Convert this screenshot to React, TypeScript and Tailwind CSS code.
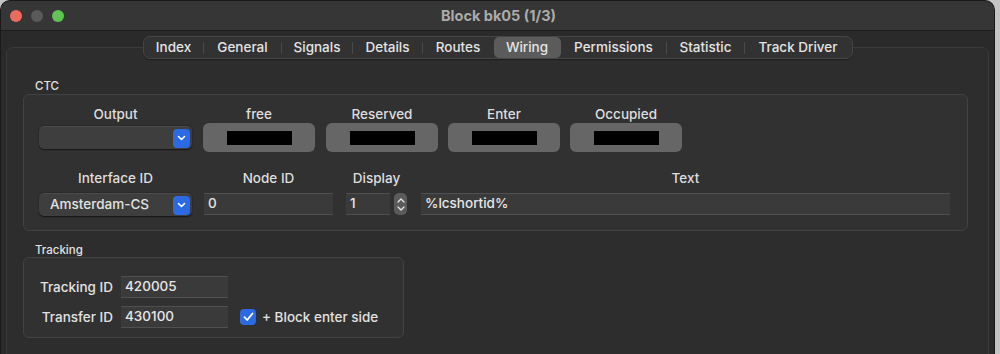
import React from "react";

const font = { fontFamily: "Inter, 'Noto Sans', 'Liberation Sans', sans-serif" };

const tabs: [string, number][] = [
  ["Index", 61],
  ["General", 78],
  ["Signals", 71],
  ["Details", 70],
  ["Routes", 71],
  ["Wiring", 67],
  ["Permissions", 106],
  ["Statistic", 78],
  ["Track Driver", 107],
];

function Chevron() {
  return (
    <svg width="9" height="6" viewBox="0 0 9 6" fill="none">
      <path d="M1.5 1.5 L4.5 4.5 L7.5 1.5" stroke="white" strokeWidth="1.6" strokeLinecap="round" strokeLinejoin="round" />
    </svg>
  );
}

function Popup({ value, width }: { value: string; width: string }) {
  return (
    <div className={`${width} h-[23px] flex items-center justify-between rounded-[5px] bg-[#3e3e3e] shadow-[0_0.5px_1.5px_rgba(0,0,0,0.6)] border-t border-[#4a4a4a] pl-[11px] pr-[2px]`}>
      <span className="text-[13.5px] font-medium text-[#e2e2e2] leading-none">{value}</span>
      <div className="w-[17px] h-[19px] rounded-[4px] bg-[#2c6ae3] flex items-center justify-center">
        <Chevron />
      </div>
    </div>
  );
}

function Field({ value, width }: { value: string; width: string }) {
  return (
    <div className={`${width} h-[22px] flex items-center bg-[#3a3a3a] border-t border-[#323232] border-b border-[#505050] pl-[4px]`}>
      <span className="text-[13.5px] font-medium text-[#e6e6e6] leading-none">{value}</span>
    </div>
  );
}

function Well() {
  return (
    <div className="w-[112px] h-[29px] rounded-[6px] bg-[#666666] flex items-center justify-center">
      <div className="w-[65px] h-[14px] bg-black" />
    </div>
  );
}

function Labeled({ label, children, width }: { label: string; children: React.ReactNode; width: string }) {
  return (
    <div className={`${width} flex flex-col items-center`}>
      <div className="h-[16px] leading-[16px] text-[13.5px] font-medium text-[#dedede] whitespace-nowrap">{label}</div>
      {children}
    </div>
  );
}

export default function App() {
  return (
    <div className="w-[1000px] h-[354px] bg-[#c4c4c4] overflow-hidden flex" style={font}>
      <div className="w-[995px] h-[354px] flex flex-col rounded-t-[10px] bg-[#2a2a2a] border-l border-r border-t border-[#1a1a1a] overflow-hidden">
        {/* title bar */}
        <div className="h-[30px] shrink-0 bg-[#363636] border-b border-[#1c1c1c] flex items-center relative">
          <div className="flex items-center gap-[9px] pl-[9px]">
            <div className="w-[12px] h-[12px] rounded-full bg-[#ee6a5f]" />
            <div className="w-[12px] h-[12px] rounded-full bg-[#5a5a5a]" />
            <div className="w-[12px] h-[12px] rounded-full bg-[#5fc454]" />
          </div>
          <div className="absolute left-0 right-0 top-0 h-[29px] flex items-center justify-center pointer-events-none">
            <span className="text-[14.5px] font-bold text-[#ababab] pl-[2px]">Block bk05 (1/3)</span>
          </div>
        </div>

        {/* tab view */}
        <div className="flex-1 pl-[5px] pr-[5px] pt-[16px]">
          <div className="h-[400px] rounded-[7px] border border-[#3b3b3b] bg-[#2d2d2d]">
            <div className="flex justify-center -mt-[12px] h-[23px]">
              <div className="flex items-center h-[23px] rounded-[7px] bg-[#323232] border border-[#464646] shadow-[0_1px_1px_rgba(0,0,0,0.3)]">
                {tabs.map(([t, w], i) => {
                  const sel = t === "Wiring";
                  const nextSel = i + 1 < tabs.length && tabs[i + 1][0] === "Wiring";
                  const showSep = i < tabs.length - 1 && !sel && !nextSel;
                  return (
                    <div key={t} className="relative h-[21px] flex items-center justify-center" style={{ width: w - (i === 0 ? 1 : 0) }}>
                      {sel && <div className="absolute inset-0 rounded-[5px] bg-[#5b5b5b]" />}
                      <span className="relative text-[13.5px] font-medium text-[#e4e4e4] whitespace-nowrap">{t}</span>
                      {showSep && <div className="absolute right-0 top-[5px] w-px h-[12px] bg-[#4a4a4a]" />}
                    </div>
                  );
                })}
              </div>
            </div>

            {/* CTC */}
            <div className="pl-[16px] pr-[20px]">
              <div className="mt-[20px] h-[14px] leading-[14px] pl-[12px] text-[11.5px] font-medium text-[#e2e2e2]">CTC</div>
              <div className="mt-[1px] h-[137px] rounded-[6px] border border-[#424242] bg-[#313131] pl-[15px] pt-[11px]">
                <div className="flex items-end">
                  <Labeled label="Output" width="w-[153px]">
                    <div className="h-[29px] mt-[1px] flex items-center">
                      <Popup value="" width="w-[153px]" />
                    </div>
                  </Labeled>
                  <div className="w-[11px]" />
                  <Labeled label="free" width="w-[112px]">
                    <div className="mt-[1px]"><Well /></div>
                  </Labeled>
                  <div className="w-[11px]" />
                  <Labeled label="Reserved" width="w-[112px]">
                    <div className="mt-[1px]"><Well /></div>
                  </Labeled>
                  <div className="w-[10px]" />
                  <Labeled label="Enter" width="w-[112px]">
                    <div className="mt-[1px]"><Well /></div>
                  </Labeled>
                  <div className="w-[10px]" />
                  <Labeled label="Occupied" width="w-[112px]">
                    <div className="mt-[1px]"><Well /></div>
                  </Labeled>
                </div>

                <div className="flex mt-[18px]">
                  <Labeled label="Interface ID" width="w-[153px]">
                    <div className="mt-[7px]"><Popup value="Amsterdam-CS" width="w-[153px]" /></div>
                  </Labeled>
                  <div className="w-[12px]" />
                  <Labeled label="Node ID" width="w-[129px]">
                    <div className="mt-[7px]"><Field value="0" width="w-[129px]" /></div>
                  </Labeled>
                  <div className="w-[13px]" />
                  <Labeled label="Display" width="w-[61px]">
                    <div className="mt-[7px] flex items-center gap-[4px]">
                      <Field value="1" width="w-[44px]" />
                      <div className="w-[13px] h-[22px] rounded-[5px] bg-[#5b5b5b] flex flex-col items-center justify-center gap-[3px]">
                        <svg width="8" height="5" viewBox="0 0 8 5" fill="none">
                          <path d="M1 4 L4 1 L7 4" stroke="#e8e8e8" strokeWidth="1.3" strokeLinecap="round" strokeLinejoin="round" />
                        </svg>
                        <svg width="8" height="5" viewBox="0 0 8 5" fill="none">
                          <path d="M1 1 L4 4 L7 1" stroke="#e8e8e8" strokeWidth="1.3" strokeLinecap="round" strokeLinejoin="round" />
                        </svg>
                      </div>
                    </div>
                  </Labeled>
                  <div className="w-[14px]" />
                  <Labeled label="Text" width="w-[529px]">
                    <div className="mt-[7px]"><Field value="%lcshortid%" width="w-[529px]" /></div>
                  </Labeled>
                </div>
              </div>

              {/* Tracking */}
              <div className="mt-[12px] h-[14px] leading-[14px] pl-[12px] text-[11.5px] font-medium text-[#e2e2e2]">Tracking</div>
              <div className="w-[381px] h-[81px] rounded-[6px] border border-[#424242] bg-[#313131] pt-[18px] flex flex-col gap-[8px]">
                <div className="flex items-center">
                  <div className="w-[89px] text-right text-[13.5px] font-medium text-[#e2e2e2] whitespace-nowrap">Tracking ID</div>
                  <div className="w-[8px]" />
                  <Field value="420005" width="w-[107px]" />
                </div>
                <div className="flex items-center">
                  <div className="w-[89px] text-right text-[13.5px] font-medium text-[#e2e2e2] whitespace-nowrap">Transfer ID</div>
                  <div className="w-[8px]" />
                  <Field value="430100" width="w-[107px]" />
                  <div className="w-[12px]" />
                  <div className="w-[16px] h-[16px] rounded-[4px] bg-[#2c6ae3] flex items-center justify-center">
                    <svg width="11" height="10" viewBox="0 0 11 10" fill="none">
                      <path d="M1.5 5.2 L4.2 8 L9.5 1.5" stroke="white" strokeWidth="1.8" strokeLinecap="round" strokeLinejoin="round" />
                    </svg>
                  </div>
                  <div className="w-[6px]" />
                  <span className="text-[13.5px] font-medium text-[#e2e2e2] whitespace-nowrap">+ Block enter side</span>
                </div>
              </div>
            </div>
          </div>
        </div>
      </div>
    </div>
  );
}
